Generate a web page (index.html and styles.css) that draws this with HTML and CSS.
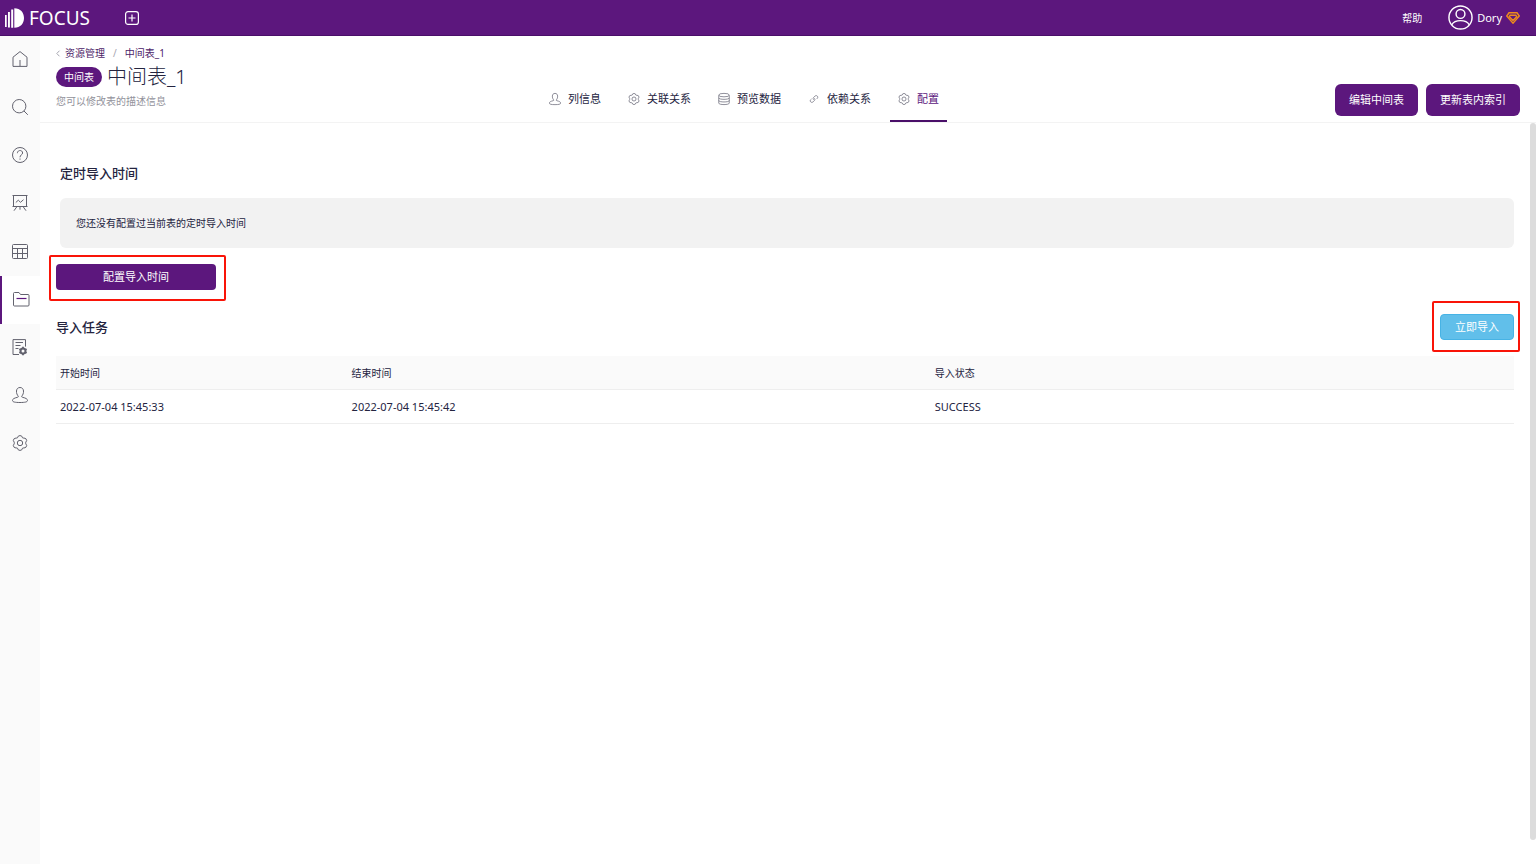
FILE: index.html
```html
<!DOCTYPE html>
<html lang="zh-CN">
<head>
<meta charset="utf-8">
<meta name="viewport" content="width=device-width, initial-scale=1">
<title>FOCUS</title>
<link rel="stylesheet" href="styles.css">
</head>
<body>
<svg class="sprite" aria-hidden="true">
  <symbol id="gear" viewBox="0 0 16 16"><path d="M6.2 1.2Q8 -.1 9.8 1.2L10.5 2.8Q11 3.2 12 3 14.400 3.100 14.700 5.500L13.800 7.200Q13.600 8 13.800 8.800L14.700 10.500Q14.400 12.900 12 13 11 12.800 10.500 13.200L9.800 14.800Q8 16.100 6.200 14.800L5.500 13.200Q5 12.800 4 13 1.600 12.900 1.300 10.500L2.200 8.800Q2.400 8 2.200 7.200L1.300 5.500Q1.600 3.100 4 3 5 3.200 5.500 2.800Z"/><circle cx="8" cy="8" r="2.700"/></symbol>
  <symbol id="person" viewBox="0 0 16 16"><path d="M6.300 9.200C3.900 7 3.300.5 8 .5S12.100 7 9.700 9.200Q9.400 10 10.500 10.300C14 11.100 15.500 12 15.500 13.500S13 15.500 8 15.500.5 15 .5 13.500 2 11.100 5.500 10.300Q6.600 10 6.300 9.200Z"/></symbol>
</svg>

<header class="topbar">
  <a class="logo" href="#">
    <svg width="20" height="20" viewBox="0 0 20 20" aria-hidden="true"><path fill="#fff" d="M0 7h1.700v12H0zM3 4h1.900v15.500H3zM6.200 1.500h2v18.200h-2zM9.300.2C15.500.2 19 4.500 19 10s-3.500 9.700-9.700 9.700z"/></svg>
    <span>FOCUS</span>
  </a>
  <button class="add" type="button" aria-label="新建">
    <svg width="14" height="14" viewBox="0 0 14 14"><rect x=".6" y=".6" width="12.800" height="12.800" rx="2.500"/><path d="M7 3.500v7M3.500 7h7"/></svg>
  </button>
  <div class="account">
    <a class="help" href="#">帮助</a>
    <a class="user" href="#">
      <svg class="avatar" width="25" height="25" viewBox="0 0 26 26" aria-hidden="true"><circle cx="13" cy="13" r="12"/><circle cx="13" cy="9.300" r="4.600"/><path d="M4 20.500C7 14.800 19 14.800 22 20.500"/></svg>
      <span>Dory</span>
      <svg class="gem" width="14" height="12" viewBox="0 0 14 12" aria-hidden="true"><path d="M3 .8h8L13.300 4 7 11.200.7 4z"/><path d="M4.200 3.200h5.600L10.800 4.600 7 8.400 3.200 4.600z"/></svg>
    </a>
  </div>
</header>

<div class="shell">
  <nav class="sidebar" aria-label="主导航">
    <a href="#" aria-label="首页"><svg viewBox="0 0 16 16"><path d="M1 6.200 8 .6l7 5.600v9.200H1zM8 9v6"/></svg></a>
    <a href="#" aria-label="搜索"><svg viewBox="0 0 16 16"><circle cx="7.200" cy="7.200" r="6.700"/><path d="m12 12 3.800 3.800"/></svg></a>
    <a href="#" aria-label="问答"><svg viewBox="0 0 16 16"><circle cx="8" cy="8" r="7.500"/><path d="M5.400 6.200C5.400 2.600 10.700 2.700 10.600 6 10.500 7.900 8 7.800 8 10.300M8 11.500v1.200"/></svg></a>
    <a href="#" aria-label="看板"><svg viewBox="0 0 16 16"><path d="M.5 .5h15M1.500 .5v11M14.500 .5v11M.5 11.500h15M3.800 7.500 6.300 5.200 8.500 7.300 11.500 4.700M5 11.500 2 15.700M11 11.500l3 4.200M8 11.500v3.200"/></svg></a>
    <a href="#" aria-label="数据表"><svg viewBox="0 0 16 16"><rect x=".5" y="1.500" width="15" height="14" rx="1"/><path d="M.5 5.500h15M.5 10.500h15M5.500 5.500v10M10.500 5.500v10"/></svg></a>
    <a class="current" href="#" aria-label="资源管理" aria-current="page"><svg viewBox="0 0 16 16"><path d="M.5 14V2.500q0-1 1-1h4.500L7.500 3.500h7.500q1 0 1 1V14q0 1-1 1H1.500q-1 0-1-1z"/><path class="accent" d="M3.500 7.500h10"/></svg></a>
    <a href="#" aria-label="任务管理"><svg viewBox="0 0 16 16"><path d="M7 15.500H1V.6h12.500v7M3.500 3.500h7.500M3.500 6.500h5M3.500 9.500h3"/><circle class="cog" cx="11" cy="12" r="2.500"/><path class="teeth" d="M11 7.800v1.500M11 14.700v1.500M7.400 9.900l1.300.8M13.300 13.300l1.300.8M7.400 14.100l1.300-.8M13.300 10.700l1.300-.8"/></svg></a>
    <a href="#" aria-label="用户"><svg><use href="#person"/></svg></a>
    <a href="#" aria-label="设置"><svg><use href="#gear"/></svg></a>
  </nav>

  <main class="main">
    <div class="page-head">
      <div class="summary">
        <nav class="crumbs" aria-label="面包屑">
          <svg width="5" height="7" viewBox="0 0 5 7" aria-hidden="true"><path d="M3.500.7.8 3.500l2.700 2.800"/></svg>
          <a href="#">资源管理</a><span class="slash">/</span><a href="#">中间表_1</a>
        </nav>
        <div class="title-row"><span class="tag">中间表</span><h1>中间表_1</h1></div>
        <p class="desc">您可以修改表的描述信息</p>
      </div>
      <nav class="tabs" aria-label="表详情">
        <a href="#"><svg><use href="#person"/></svg>列信息</a>
        <a href="#"><svg><use href="#gear"/></svg>关联关系</a>
        <a href="#"><svg viewBox="0 0 16 16"><ellipse cx="8" cy="2.800" rx="7" ry="2.300"/><path d="M1 3v10.500c0 2.600 14 2.600 14 0V3M1 6.500c0 2.600 14 2.600 14 0M1 10c0 2.600 14 2.600 14 0"/></svg>预览数据</a>
        <a href="#"><svg viewBox="0 0 16 16"><path d="M7.600 9C6.300 7.900 6.700 6.700 7.600 5.800L9.200 4.200C11.500 2.200 14.300 4.900 12.300 7.200L11.500 8M8.400 7C9.700 8.100 9.300 9.300 8.400 10.200L6.800 11.800C4.500 13.800 1.700 11.100 3.700 8.800L4.500 8"/></svg>依赖关系</a>
        <a class="active" href="#" aria-current="true"><svg><use href="#gear"/></svg>配置</a>
      </nav>
      <div class="actions">
        <button class="btn" type="button">编辑中间表</button>
        <button class="btn" type="button">更新表内索引</button>
      </div>
    </div>

    <div class="content">
      <section class="schedule">
        <h2>定时导入时间</h2>
        <p class="notice">您还没有配置过当前表的定时导入时间</p>
      </section>
      <div class="marked config"><button class="btn btn-wide" type="button">配置导入时间</button></div>
      <div class="task-head">
        <h2>导入任务</h2>
        <div class="marked import"><button class="btn btn-blue" type="button">立即导入</button></div>
      </div>
      <table class="tasks">
        <thead><tr><th class="start" scope="col">开始时间</th><th class="end" scope="col">结束时间</th><th scope="col">导入状态</th></tr></thead>
        <tbody><tr><td>2022-07-04 15:45:33</td><td>2022-07-04 15:45:42</td><td>SUCCESS</td></tr></tbody>
      </table>
      <div class="scrollbar" aria-hidden="true"></div>
    </div>
  </main>
</div>
</body>
</html>
```
FILE: styles.css
```css
* { box-sizing: border-box; }

body {
  margin: 0;
  min-height: 100vh;
  display: flex;
  flex-direction: column;
  background: #fff;
  color: #24243f;
  font: 11px/16px "Noto Sans", "Noto Sans CJK SC", sans-serif;
}

a { color: inherit; text-decoration: none; }
h1, h2, p { margin: 0; font-weight: 400; }
button { font: inherit; border: 0; padding: 0; cursor: pointer; }
svg { display: block; flex: none; fill: none; stroke: currentColor; }
.sprite { position: absolute; width: 0; height: 0; }

.topbar {
  display: flex;
  align-items: center;
  height: 36px;
  padding: 0 16px 0 5px;
  background: #5c177d;
  border-bottom: 1px solid #4a0f69;
  color: #fff;
}
.logo { display: flex; align-items: center; gap: 4px; font-size: 19px; line-height: 24px; }
.logo svg { stroke: none; }
.add { margin-left: 35px; background: none; color: #fff; }
.add svg { stroke-width: 1.2; }
.account { display: flex; align-items: center; gap: 26px; margin-left: auto; }
.help { font-size: 10px; }
.user { display: flex; align-items: center; gap: 4px; }
.avatar { stroke-width: 1.5; }
.gem { color: #ee8c1c; stroke-width: 1.4; }

.shell { display: flex; flex: 1; }

.sidebar { flex: none; width: 40px; background: #fafafa; color: #62626e; }
.sidebar a { display: flex; align-items: center; justify-content: center; height: 48px; padding-bottom: 2px; }
.sidebar svg { width: 16px; height: 16px; overflow: visible; }
.sidebar .current { background: #fff; border-left: 2px solid #5c177d; }
.accent { stroke: #5c177d; stroke-width: 1.2; }
.cog { stroke-width: 2; }
.teeth { stroke-width: 1.8; }

.main { display: flex; flex-direction: column; flex: 1; min-width: 0; }
.page-head {
  display: grid;
  grid-template-columns: 11fr auto 13fr;
  padding: 0 16px;
  border-bottom: 1px solid #f3f3f3;
}
.summary { padding: 9px 0 13px; }
.crumbs { display: flex; align-items: center; gap: 4px; color: #4c2368; font-size: 10px; }
.crumbs svg, .slash { color: #a5a5b0; }
.slash { padding: 0 4px; }
.title-row { display: flex; align-items: center; gap: 5px; height: 32px; }
.tag {
  padding: 2px 8px;
  border-radius: 10px;
  background: #5c177d;
  color: #fff;
  font-size: 10px;
}
h1 { font-size: 20px; line-height: 32px; font-weight: 300; }
.desc { color: #92929b; font-size: 10px; }

.tabs { display: flex; gap: 11px; }
.tabs a {
  display: flex;
  align-items: flex-end;
  gap: 7px;
  padding: 0 8px 13px;
  border-bottom: 2px solid transparent;
  white-space: nowrap;
}
.tabs svg { width: 12px; height: 16px; color: #6b6b7a; }
.tabs .active { border-color: #4a0f69; color: #5c177d; }

.actions { display: flex; align-items: flex-end; justify-content: flex-end; gap: 8px; padding-bottom: 6px; }
.btn {
  min-height: 32px;
  padding: 0 14px;
  border-radius: 6px;
  background: #5c177d;
  color: #fff;
  font-size: 11px;
  white-space: nowrap;
}

.content { position: relative; flex: 1; padding: 40px 22px 24px 16px; }
h2 { font-size: 13px; line-height: 20px; font-weight: 500; }
.schedule { padding-left: 4px; }
.notice {
  margin-top: 15px;
  padding: 17px 16px;
  border-radius: 6px;
  background: #f2f2f2;
  font-size: 10px;
}
.marked { position: relative; }
.marked::after {
  content: "";
  position: absolute;
  border: 2px solid #f91408;
  border-radius: 2px;
  pointer-events: none;
}
.config { width: 160px; margin-top: 16px; }
.config::after { inset: -9px -10px -11px -7px; }
.btn-wide { display: block; width: 100%; min-height: 26px; border-radius: 4px; }
.task-head { display: flex; align-items: center; justify-content: space-between; margin-top: 24px; }
.import::after { inset: -13px -6px -12px -8px; }
.btn-blue {
  display: block;
  min-height: 26px;
  border: 1px solid #47b3e5;
  border-radius: 4px;
  background: #61bfea;
}

.tasks { width: 100%; margin-top: 16px; border-collapse: collapse; table-layout: fixed; }
.tasks th, .tasks td {
  padding: 9px 4px 8px;
  border-bottom: 1px solid #eee;
  font-weight: 400;
  text-align: left;
}
.tasks th { background: #fafafa; font-size: 10px; }
.start { width: 20%; }
.end { width: 40%; }

.scrollbar {
  position: absolute;
  top: 0;
  right: 0;
  bottom: 24px;
  width: 6px;
  border-radius: 3px;
  background: #dcdcdc;
}
```
